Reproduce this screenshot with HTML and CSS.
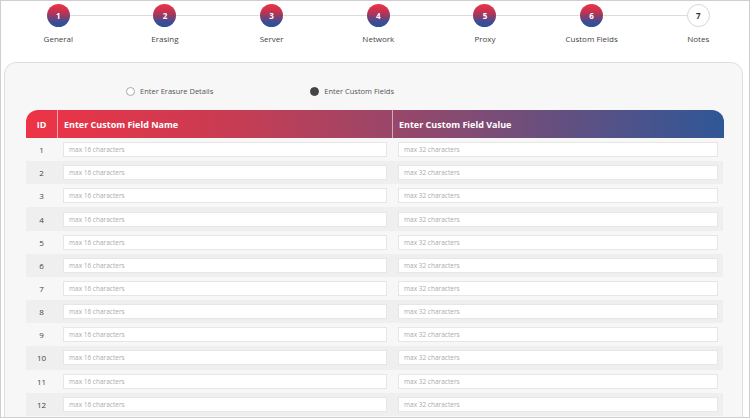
FILE: index.html
```html
<!DOCTYPE html>
<html lang="en">
<head>
<meta charset="utf-8">
<title>Custom Fields</title>
<link rel="stylesheet" href="styles.css">
</head>
<body>
<div class="frame">
  <ol class="steps">
    <li class="step done"><span class="dot">1</span><span class="label">General</span></li>
    <li class="step done"><span class="dot">2</span><span class="label">Erasing</span></li>
    <li class="step done"><span class="dot">3</span><span class="label">Server</span></li>
    <li class="step done"><span class="dot">4</span><span class="label">Network</span></li>
    <li class="step done"><span class="dot">5</span><span class="label">Proxy</span></li>
    <li class="step done"><span class="dot">6</span><span class="label">Custom Fields</span></li>
    <li class="step"><span class="dot">7</span><span class="label">Notes</span></li>
  </ol>
  <section class="panel">
    <div class="radios">
      <label class="radio"><span class="radio-mark"></span>Enter Erasure Details</label>
      <label class="radio checked"><span class="radio-mark"></span>Enter Custom Fields</label>
    </div>
    <div class="grid">
      <div class="head id">ID</div>
      <div class="head">Enter Custom Field Name</div>
      <div class="head">Enter Custom Field Value</div>
    </div>
    <div class="rows">
      <div class="row"><div class="num">1</div><div class="cell"><div class="input">max 16 characters</div></div><div class="cell"><div class="input">max 32 characters</div></div></div>
      <div class="row"><div class="num">2</div><div class="cell"><div class="input">max 16 characters</div></div><div class="cell"><div class="input">max 32 characters</div></div></div>
      <div class="row"><div class="num">3</div><div class="cell"><div class="input">max 16 characters</div></div><div class="cell"><div class="input">max 32 characters</div></div></div>
      <div class="row"><div class="num">4</div><div class="cell"><div class="input">max 16 characters</div></div><div class="cell"><div class="input">max 32 characters</div></div></div>
      <div class="row"><div class="num">5</div><div class="cell"><div class="input">max 16 characters</div></div><div class="cell"><div class="input">max 32 characters</div></div></div>
      <div class="row"><div class="num">6</div><div class="cell"><div class="input">max 16 characters</div></div><div class="cell"><div class="input">max 32 characters</div></div></div>
      <div class="row"><div class="num">7</div><div class="cell"><div class="input">max 16 characters</div></div><div class="cell"><div class="input">max 32 characters</div></div></div>
      <div class="row"><div class="num">8</div><div class="cell"><div class="input">max 16 characters</div></div><div class="cell"><div class="input">max 32 characters</div></div></div>
      <div class="row"><div class="num">9</div><div class="cell"><div class="input">max 16 characters</div></div><div class="cell"><div class="input">max 32 characters</div></div></div>
      <div class="row"><div class="num">10</div><div class="cell"><div class="input">max 16 characters</div></div><div class="cell"><div class="input">max 32 characters</div></div></div>
      <div class="row"><div class="num">11</div><div class="cell"><div class="input">max 16 characters</div></div><div class="cell"><div class="input">max 32 characters</div></div></div>
      <div class="row"><div class="num">12</div><div class="cell"><div class="input">max 16 characters</div></div><div class="cell"><div class="input">max 32 characters</div></div></div>
    </div>
  </section>
</div>
</body>
</html>
```
FILE: styles.css
```css
* { box-sizing: border-box; }
html, body { margin: 0; padding: 0; }
body {
  font-family: "Open Sans", "Liberation Sans", sans-serif;
  background: #fff;
  color: #444;
}
.frame {
  width: 750px;
  height: 418px;
  border: 1px solid #cfcfcf;
  overflow: hidden;
  padding: 3px 0 0 3px;
}
.steps {
  list-style: none;
  margin: 0;
  padding: 0;
  display: grid;
  grid-template-columns: repeat(7, 106.67px);
  position: relative;
  margin-left: 1px;
}
.steps::before {
  content: "";
  position: absolute;
  left: 53px;
  right: 53px;
  top: 11px;
  height: 1px;
  background: #dcdcdc;
}
.step {
  display: flex;
  flex-direction: column;
  align-items: center;
  position: relative;
}
.dot {
  width: 23px;
  height: 23px;
  border-radius: 50%;
  display: flex;
  align-items: center;
  justify-content: center;
  font-size: 8px;
  font-weight: 700;
  color: #333;
  background: #fff;
  border: 1px solid #d6d6d6;
}
.step.done .dot {
  border: none;
  color: #fff;
  background: linear-gradient(180deg, #ef3347 0%, #c0324f 35%, #3a4d96 80%, #2c5196 100%);
}
.label {
  margin-top: 6px;
  font-size: 8px;
  color: #444;
}
.panel {
  margin-top: 18px;
  width: 739px;
  height: 400px;
  border: 1px solid #dedede;
  border-radius: 12px;
  background: #f7f7f7;
  padding: 23px 18px 0 21px;
}
.radios {
  display: flex;
  gap: 97px;
  padding-left: 100px;
  height: 24px;
  align-items: flex-start;
}
.radio {
  display: flex;
  align-items: center;
  gap: 5px;
  font-size: 7.5px;
  color: #555;
}
.radio-mark {
  width: 9px;
  height: 9px;
  border-radius: 50%;
  border: 1px solid #aaa;
  background: #fff;
}
.radio.checked .radio-mark {
  border-color: #444;
  background: #444;
}
.grid {
  display: grid;
  grid-template-columns: 31px 335px 331px;
  height: 28px;
  border-radius: 12px 12px 0 0;
  background: linear-gradient(90deg, #ee3346 0%, #c73c53 30%, #8a4a70 60%, #2f5797 100%);
}
.head {
  display: flex;
  align-items: center;
  padding-left: 6px;
  color: #fff;
  font-weight: 700;
  font-size: 9px;
  border-left: 1px solid rgba(255,255,255,0.55);
}
.head.id {
  border-left: none;
  justify-content: center;
  padding-left: 0;
}
.rows {
  display: grid;
  grid-auto-rows: 23.17px;
  width: 697px;
}
.row {
  display: grid;
  grid-template-columns: 31px 335px 331px;
  background: #f7f7f7;
}
.row:nth-child(even) { background: #efefef; }
.num {
  display: flex;
  align-items: center;
  justify-content: center;
  font-size: 8px;
  color: #444;
}
.cell {
  display: flex;
  align-items: center;
  padding: 0 5px 0 6px;
}
.input {
  width: 100%;
  height: 15px;
  background: #fff;
  border: 1px solid #e6e6e6;
  font-size: 6.5px;
  color: #aaa;
  display: flex;
  align-items: center;
  padding-left: 5px;
}
```
